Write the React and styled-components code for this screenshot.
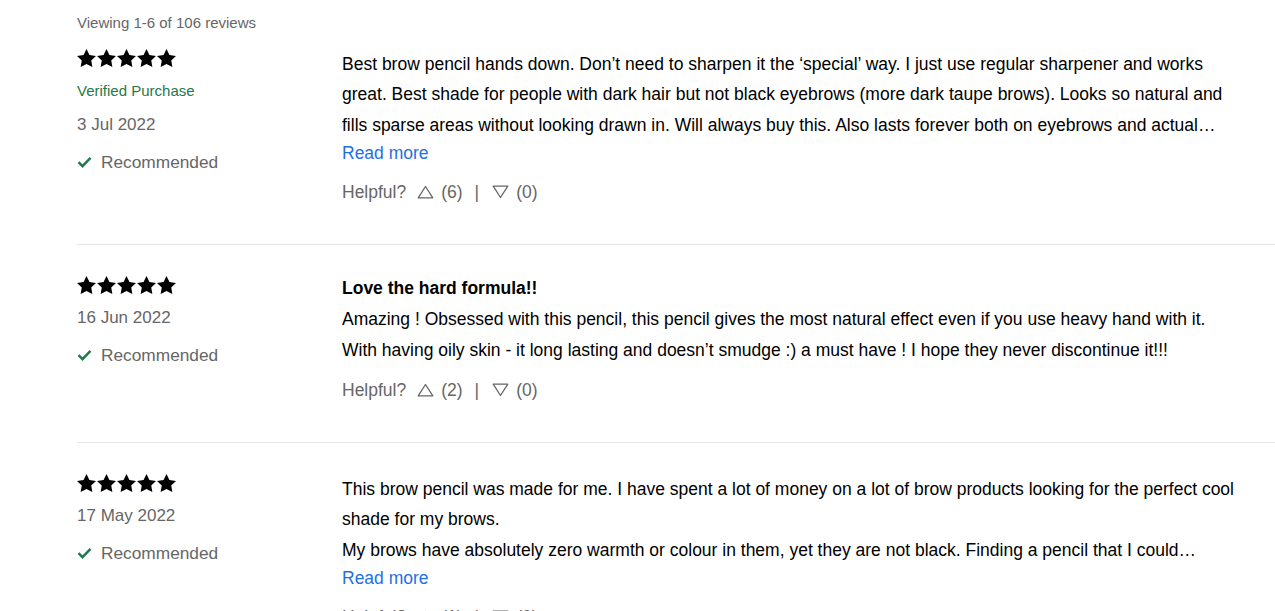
import React from 'react';
import styled, { createGlobalStyle } from 'styled-components';

const GlobalStyle = createGlobalStyle`
  html, body {
    margin: 0;
    padding: 0;
    background: #fff;
    overflow: hidden;
  }
  body {
    font-family: 'Liberation Sans', Arial, sans-serif;
    color: #000;
  }
`;

const reviews = [
  {
    id: 1,
    verified: true,
    date: '3 Jul 2022',
    body: 'Best brow pencil hands down. Don’t need to sharpen it the ‘special’ way. I just use regular sharpener and works great. Best shade for people with dark hair but not black eyebrows (more dark taupe brows). Looks so natural and fills sparse areas without looking drawn in. Will always buy this. Also lasts forever both on eyebrows and actual pencil, I have been using the same one for months.',
    clamp: true,
    up: 6,
    down: 0,
  },
  {
    id: 2,
    date: '16 Jun 2022',
    title: 'Love the hard formula!!',
    body: 'Amazing ! Obsessed with this pencil, this pencil gives the most natural effect even if you use heavy hand with it. With having oily skin - it long lasting and doesn’t smudge :) a must have ! I hope they never discontinue it!!!',
    up: 2,
    down: 0,
  },
  {
    id: 3,
    date: '17 May 2022',
    body: 'This brow pencil was made for me. I have spent a lot of money on a lot of brow products looking for the perfect cool shade for my brows.\nMy brows have absolutely zero warmth or colour in them, yet they are not black. Finding a pencil that I could actually use without it turning red or orange on my skin has been so hard until now.',
    clamp: true,
    up: 1,
    down: 0,
  },
];

const Star = () => (
  <svg width="19" height="18" viewBox="2 2 20 19" fill="#000">
    <path d="M12 2l3.09 6.26L22 9.27l-5 4.87 1.18 6.88L12 17.77l-6.18 3.25L7 14.14 2 9.27l6.91-1.01L12 2z" />
  </svg>
);

const CheckIcon = () => (
  <svg width="15" height="12" viewBox="0 0 15 12" fill="none">
    <path d="M1.5 6.2l4 4L13.5 1.8" stroke="#1e7a4a" strokeWidth="2.4" />
  </svg>
);

const TriangleUp = () => (
  <svg width="17" height="14" viewBox="0 0 17 14" fill="none">
    <path d="M8.5 1.5L15.8 12.8H1.2z" stroke="#666" strokeWidth="1.3" strokeLinejoin="round" />
  </svg>
);

const TriangleDown = () => (
  <svg width="17" height="14" viewBox="0 0 17 14" fill="none">
    <path d="M8.5 12.5L15.8 1.2H1.2z" stroke="#666" strokeWidth="1.3" strokeLinejoin="round" />
  </svg>
);

const Review = ({ review, first }) => (
  <ReviewRow $first={first}>
    <Meta>
      <Stars>
        {[0, 1, 2, 3, 4].map((i) => (
          <Star key={i} />
        ))}
      </Stars>
      {review.verified && <Verified>Verified Purchase</Verified>}
      <DateText>{review.date}</DateText>
      <Recommended>
        <CheckIcon />
        <span>Recommended</span>
      </Recommended>
    </Meta>
    <Content>
      {review.title && <Title>{review.title}</Title>}
      <Body $clamp={review.clamp}>{review.body}</Body>
      {review.clamp && <ReadMore type="button">Read more</ReadMore>}
      <Helpful>
        <HelpfulLabel>Helpful?</HelpfulLabel>
        <Vote type="button">
          <TriangleUp />({review.up})
        </Vote>
        <Separator>|</Separator>
        <Vote type="button">
          <TriangleDown />({review.down})
        </Vote>
      </Helpful>
    </Content>
  </ReviewRow>
);

const App = () => {
  return (
    <>
      <GlobalStyle />
      <Page>
        <Summary>Viewing 1-6 of 106 reviews</Summary>
        {reviews.map((review, i) => (
          <Review key={review.id} review={review} first={i === 0} />
        ))}
      </Page>
    </>
  );
};

const Page = styled.main`
  padding-left: 77px;
`;

const Summary = styled.div`
  margin-top: 13px;
  font-size: 15px;
  line-height: 20px;
  color: #666;
`;

const ReviewRow = styled.section`
  display: grid;
  grid-template-columns: 265px 898px;
  padding: ${(p) => (p.$first ? '16px' : '31px')} 0 40px;
  border-bottom: 1px solid #e6e6e6;
`;

const Meta = styled.div`
  display: flex;
  flex-direction: column;
  align-items: flex-start;
`;

const Stars = styled.div`
  display: flex;
  gap: 1px;
  height: 18px;
`;

const Verified = styled.div`
  margin-top: 14px;
  font-size: 15px;
  line-height: 20px;
  color: #1e7a4a;
`;

const DateText = styled.div`
  margin-top: 12px;
  font-size: 17px;
  line-height: 24px;
  color: #666;
`;

const Recommended = styled.div`
  display: flex;
  align-items: center;
  gap: 9px;
  margin-top: 13px;
  font-size: 17.3px;
  line-height: 24px;
  color: #666;
`;

const Content = styled.div`
  display: flex;
  flex-direction: column;
  align-items: flex-start;
`;

const Title = styled.h3`
  margin: 0 0 4px;
  font-size: 17.5px;
  line-height: 24px;
  font-weight: 700;
`;

const Body = styled.p`
  margin: 0;
  font-size: 17.5px;
  line-height: 30.4px;
  white-space: pre-line;
  ${(p) =>
    p.$clamp &&
    `
    display: -webkit-box;
    -webkit-box-orient: vertical;
    -webkit-line-clamp: 3;
    overflow: hidden;
  `}
`;

const ReadMore = styled.button`
  padding: 0;
  border: 0;
  background: none;
  font-family: inherit;
  font-size: 17.5px;
  line-height: 27px;
  color: #1f6fe5;
  cursor: pointer;
`;

const Helpful = styled.div`
  display: flex;
  align-items: center;
  margin-top: 13px;
  font-size: 17.5px;
  line-height: 24px;
  color: #666;
`;

const HelpfulLabel = styled.span`
  margin-right: 11px;
`;

const Vote = styled.button`
  display: flex;
  align-items: center;
  gap: 7px;
  padding: 0;
  border: 0;
  background: none;
  font-family: inherit;
  font-size: 17.5px;
  line-height: 24px;
  color: #666;
  cursor: pointer;
`;

const Separator = styled.span`
  margin: 0 13px 0 12px;
`;

export default App;
